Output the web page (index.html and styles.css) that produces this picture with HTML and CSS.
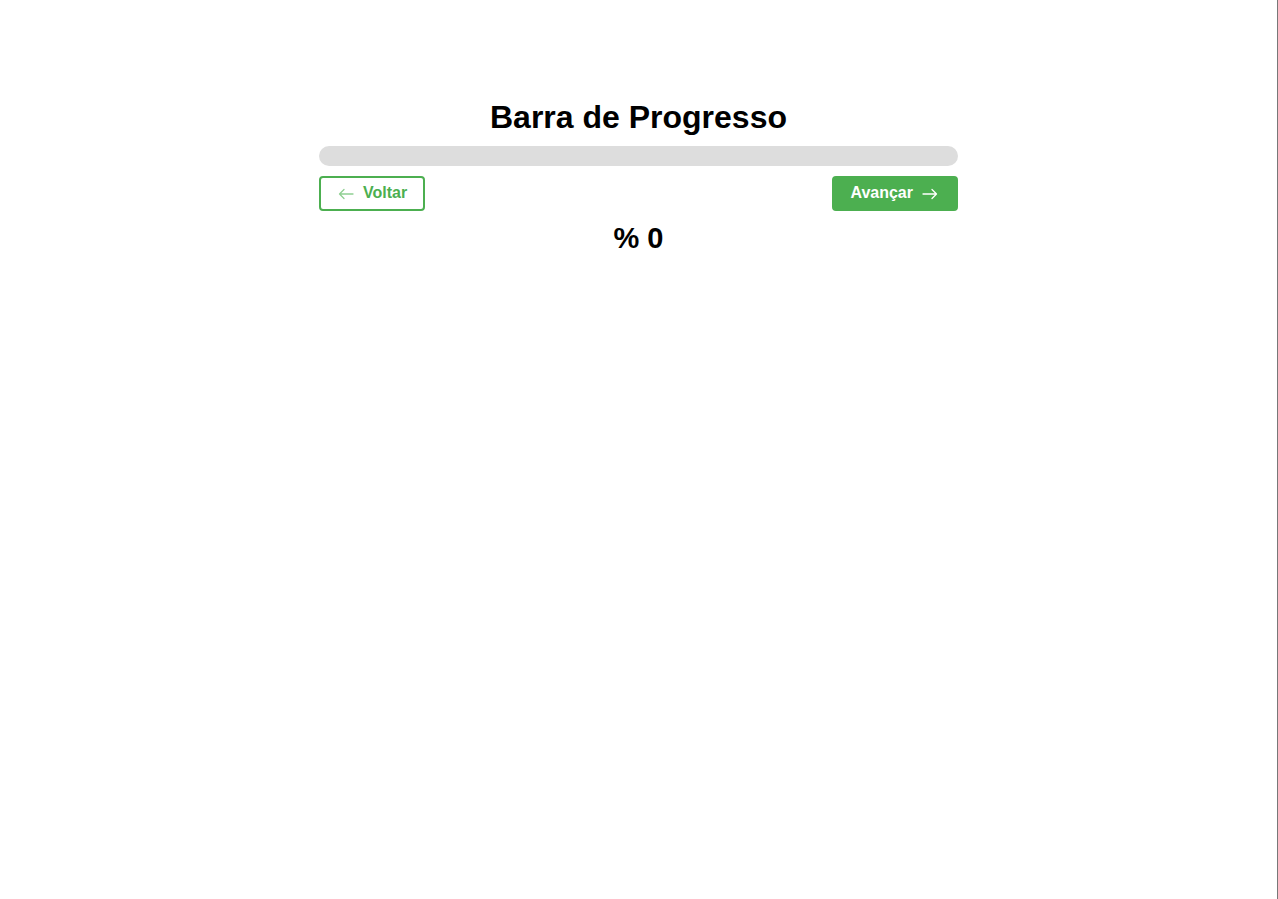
FILE: index.html
```html
<!DOCTYPE html>
<html lang="pt">
<head>
<meta charset="utf-8">
<title>Barra de Progresso</title>
<link rel="stylesheet" href="styles.css">
</head>
<body>
<main class="container">
  <h1 class="title">Barra de Progresso</h1>
  <div class="progress"><div class="progress-fill" style="width:0%"></div></div>
  <div class="actions">
    <button class="btn btn-outline" type="button">
      <svg class="icon" width="18" height="18" viewBox="0 0 18 18" aria-hidden="true"><path d="M16 9H2.5M7 4.5L2.5 9L7 13.5" fill="none" stroke="currentColor" stroke-width="1.3" stroke-linecap="round" stroke-linejoin="round"/></svg>
      <span>Voltar</span>
    </button>
    <button class="btn btn-solid" type="button">
      <span>Avançar</span>
      <svg class="icon" width="18" height="18" viewBox="0 0 18 18" aria-hidden="true"><path d="M2 9H15.5M11 4.5L15.5 9L11 13.5" fill="none" stroke="currentColor" stroke-width="1.3" stroke-linecap="round" stroke-linejoin="round"/></svg>
    </button>
  </div>
  <h2 class="percent">% 0</h2>
</main>
</body>
</html>
```
FILE: styles.css
```css
html {
  box-sizing: border-box;
  min-height: 100vh;
  border-right: 1px solid #787878;
  background: #ffffff;
}
body {
  margin: 0;
  font-family: "Liberation Sans", Arial, sans-serif;
  color: #000;
}
.container {
  width: 639px;
  margin: 99px auto 0;
  display: flex;
  flex-direction: column;
}
.title {
  margin: 0;
  font-size: 32px;
  line-height: 37px;
  font-weight: bold;
  text-align: center;
}
.progress {
  margin-top: 10px;
  height: 20px;
  border-radius: 10px;
  background: #dddddd;
  overflow: hidden;
}
.progress-fill {
  height: 100%;
  background: #4caf50;
}
.actions {
  margin-top: 10px;
  display: flex;
  justify-content: space-between;
}
.btn {
  display: flex;
  align-items: center;
  gap: 8px;
  height: 35px;
  box-sizing: border-box;
  padding: 5px 16px 7px;
  border: 2px solid #4caf50;
  border-radius: 4px;
  font-family: "Liberation Sans", Arial, sans-serif;
  font-size: 16px;
  line-height: 19px;
  font-weight: bold;
  cursor: pointer;
}
.btn-outline {
  background: #ffffff;
  color: #4caf50;
}
.btn-outline .icon {
  color: #8fcf92;
}
.btn-solid {
  background: #4caf50;
  color: #ffffff;
  padding-right: 17px;
}
.icon {
  display: block;
  flex: none;
  margin-top: 2px;
}
.percent {
  margin: 11px 0 0;
  font-size: 29px;
  line-height: 33px;
  font-weight: bold;
  text-align: center;
}
```
